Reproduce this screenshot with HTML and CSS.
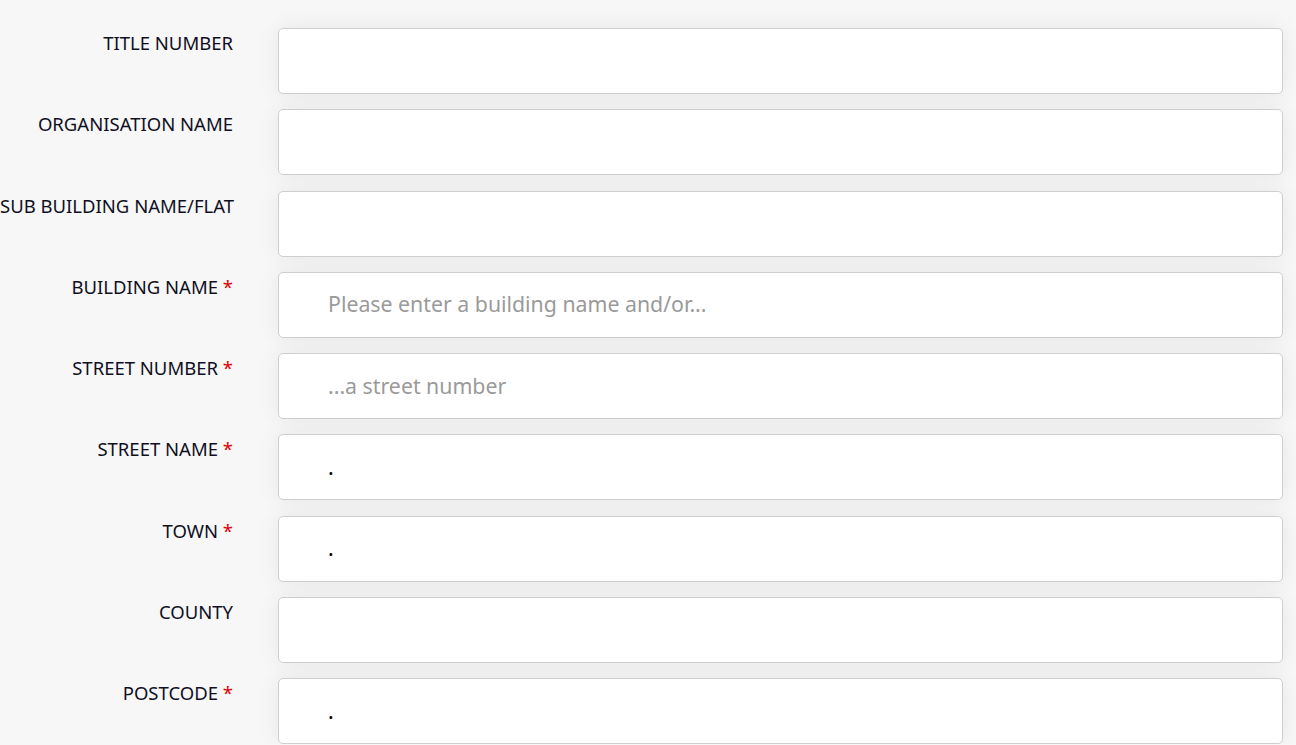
FILE: index.html
```html
<!DOCTYPE html>
<html>
<head>
<meta charset="utf-8">
<link rel="stylesheet" href="styles.css">
</head>
<body>
<form class="form">
  <div class="row"><label class="label">TITLE NUMBER</label><input class="field" type="text"></div>
  <div class="row"><label class="label">ORGANISATION NAME</label><input class="field" type="text"></div>
  <div class="row"><label class="label">SUB BUILDING NAME/FLAT</label><input class="field" type="text"></div>
  <div class="row"><label class="label">BUILDING NAME <span class="req">*</span></label><input class="field" type="text" placeholder="Please enter a building name and/or..."></div>
  <div class="row"><label class="label">STREET NUMBER <span class="req">*</span></label><input class="field" type="text" placeholder="...a street number"></div>
  <div class="row"><label class="label">STREET NAME <span class="req">*</span></label><input class="field" type="text" value="."></div>
  <div class="row"><label class="label">TOWN <span class="req">*</span></label><input class="field" type="text" value="."></div>
  <div class="row"><label class="label">COUNTY</label><input class="field" type="text"></div>
  <div class="row"><label class="label">POSTCODE <span class="req">*</span></label><input class="field" type="text" value="."></div>
</form>
</body>
</html>
```
FILE: styles.css
```css
html, body {
  margin: 0;
  padding: 0;
  background: #f7f7f7;
  overflow: hidden;
}
.form {
  display: flex;
  flex-direction: column;
  gap: 15.25px;
  padding: 28px 13px 0 0;
}
.row {
  display: grid;
  grid-template-columns: 233px 1fr;
  column-gap: 45px;
  align-items: start;
}
.label {
  text-align: right;
  font-family: "Noto Sans", "Open Sans", sans-serif;
  font-size: 18.5px;
  letter-spacing: 0;
  color: #10101f;
  padding-top: 2px;
  line-height: 26px;
  white-space: nowrap;
}
.req {
  color: #e00000;
}
.field {
  box-sizing: border-box;
  height: 66px;
  width: 100%;
  margin: 0;
  border: 1px solid #cfcfcf;
  border-radius: 5px;
  background: #fff;
  box-shadow: 0 0 22px rgba(0, 0, 0, 0.07);
  padding: 0 0 2px 49px;
  font-family: "Noto Sans", "Open Sans", sans-serif;
  font-size: 21.3px;
  letter-spacing: 0;
  color: #000;
  outline: none;
}
.field::placeholder {
  color: #9a9a9a;
}
```
